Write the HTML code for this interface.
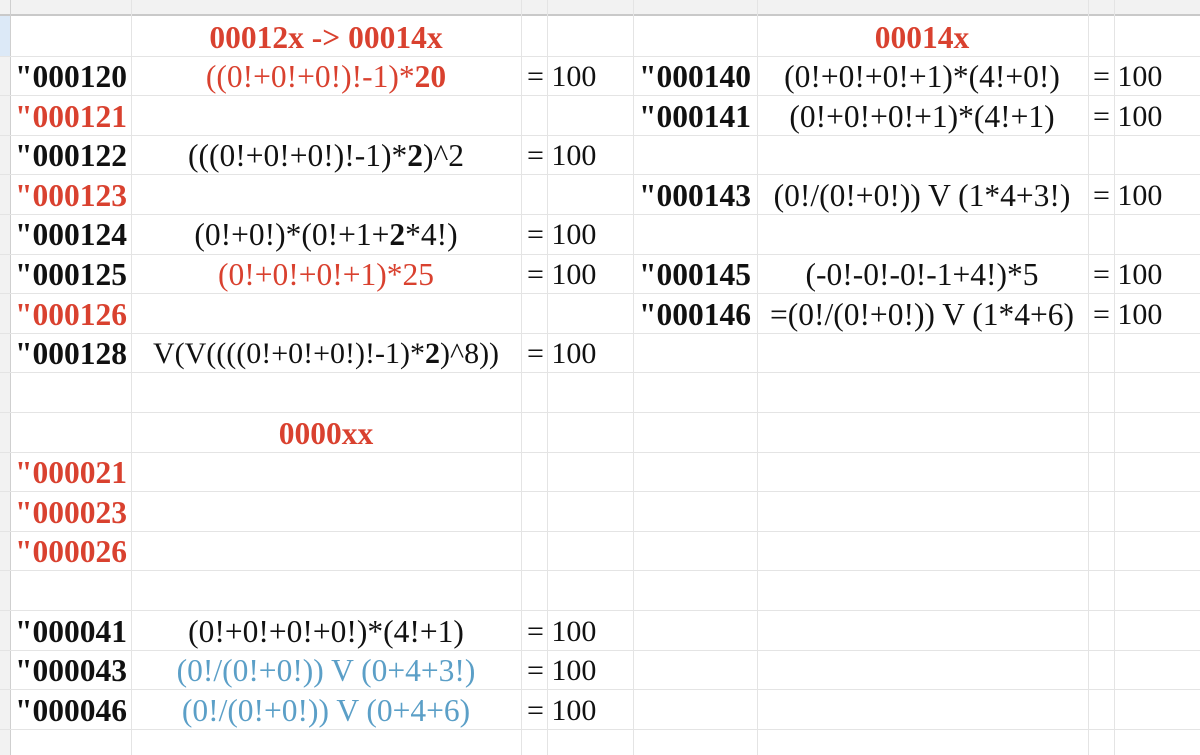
<!DOCTYPE html>
<html><head><meta charset="utf-8"><style>
*{margin:0;padding:0;box-sizing:border-box}
body{width:1200px;height:755px;overflow:hidden;background:#fff;position:relative;font-family:"Liberation Serif",serif;font-size:31.5px;color:#111}
.hl{position:absolute;left:0;width:1200px;height:1px;background:#e4e4e4}
.vl{position:absolute;top:0;height:755px;width:1px;background:#e4e4e4}
.t{position:absolute;height:39px;line-height:41px;white-space:nowrap}
.c{transform:translateX(-50%)}
.b{font-weight:bold;font-size:31.5px}
.r{color:#d9412f}
.u{color:#5b9fc7}
.e{font-size:30px}
</style></head><body>
<div style="position:absolute;left:0;top:0;width:1200px;height:14px;background:#f2f2f2"></div>
<div style="position:absolute;left:0;top:14px;width:1200px;height:2px;background:#c9c9c9"></div>
<div style="position:absolute;left:0;top:16px;width:10px;height:739px;background:#f2f2f2"></div>
<div style="position:absolute;left:0;top:16px;width:10px;height:40px;background:#dce9f7"></div>
<div class="vl" style="left:10px;background:#cfcfcf"></div>
<div class="vl" style="left:131px"></div>
<div class="vl" style="left:521px"></div>
<div class="vl" style="left:547px"></div>
<div class="vl" style="left:633px"></div>
<div class="vl" style="left:757px"></div>
<div class="vl" style="left:1088px"></div>
<div class="vl" style="left:1114px"></div>
<div class="hl" style="top:56px"></div><div class="hl" style="top:95px"></div><div class="hl" style="top:135px"></div><div class="hl" style="top:174px"></div><div class="hl" style="top:214px"></div><div class="hl" style="top:254px"></div><div class="hl" style="top:293px"></div><div class="hl" style="top:333px"></div><div class="hl" style="top:372px"></div><div class="hl" style="top:412px"></div><div class="hl" style="top:452px"></div><div class="hl" style="top:491px"></div><div class="hl" style="top:531px"></div><div class="hl" style="top:570px"></div><div class="hl" style="top:610px"></div><div class="hl" style="top:650px"></div><div class="hl" style="top:689px"></div><div class="hl" style="top:729px"></div>

<div class="t c b r" style="left:326px;top:17px">00012x -&gt; 00014x</div>
<div class="t c b r" style="left:922px;top:17px">00014x</div>

<div class="t b" style="left:15px;top:56px">"000120</div>
<div class="t c r" style="left:326px;top:56px">((0!+0!+0!)!-1)*<b>20</b></div>
<div class="t e" style="left:527px;top:56px">= 100</div>
<div class="t b" style="left:639px;top:56px">"000140</div>
<div class="t c" style="left:922px;top:56px">(0!+0!+0!+1)*(4!+0!)</div>
<div class="t e" style="left:1093px;top:56px">= 100</div>

<div class="t b r" style="left:15px;top:96px">"000121</div>
<div class="t b" style="left:639px;top:96px">"000141</div>
<div class="t c" style="left:922px;top:96px">(0!+0!+0!+1)*(4!+1)</div>
<div class="t e" style="left:1093px;top:96px">= 100</div>

<div class="t b" style="left:15px;top:135px">"000122</div>
<div class="t c" style="left:326px;top:135px">(((0!+0!+0!)!-1)*<b>2</b>)^2</div>
<div class="t e" style="left:527px;top:135px">= 100</div>

<div class="t b r" style="left:15px;top:175px">"000123</div>
<div class="t b" style="left:639px;top:175px">"000143</div>
<div class="t c" style="left:922px;top:175px">(0!/(0!+0!)) V (1*4+3!)</div>
<div class="t e" style="left:1093px;top:175px">= 100</div>

<div class="t b" style="left:15px;top:214px">"000124</div>
<div class="t c" style="left:326px;top:214px">(0!+0!)*(0!+1+<b>2</b>*4!)</div>
<div class="t e" style="left:527px;top:214px">= 100</div>

<div class="t b" style="left:15px;top:254px">"000125</div>
<div class="t c r" style="left:326px;top:254px">(0!+0!+0!+1)*25</div>
<div class="t e" style="left:527px;top:254px">= 100</div>
<div class="t b" style="left:639px;top:254px">"000145</div>
<div class="t c" style="left:922px;top:254px">(-0!-0!-0!-1+4!)*5</div>
<div class="t e" style="left:1093px;top:254px">= 100</div>

<div class="t b r" style="left:15px;top:294px">"000126</div>
<div class="t b" style="left:639px;top:294px">"000146</div>
<div class="t c" style="left:922px;top:294px">=(0!/(0!+0!)) V (1*4+6)</div>
<div class="t e" style="left:1093px;top:294px">= 100</div>

<div class="t b" style="left:15px;top:333px">"000128</div>
<div class="t c" style="left:326px;top:333px;font-size:30px">V(V((((0!+0!+0!)!-1)*<b>2</b>)^8))</div>
<div class="t e" style="left:527px;top:333px">= 100</div>

<div class="t c b r" style="left:326px;top:413px">0000xx</div>
<div class="t b r" style="left:15px;top:452px">"000021</div>
<div class="t b r" style="left:15px;top:492px">"000023</div>
<div class="t b r" style="left:15px;top:531px">"000026</div>

<div class="t b" style="left:15px;top:611px">"000041</div>
<div class="t c" style="left:326px;top:611px">(0!+0!+0!+0!)*(4!+1)</div>
<div class="t e" style="left:527px;top:611px">= 100</div>
<div class="t b" style="left:15px;top:650px">"000043</div>
<div class="t c u" style="left:326px;top:650px">(0!/(0!+0!)) V (0+4+3!)</div>
<div class="t e" style="left:527px;top:650px">= 100</div>
<div class="t b" style="left:15px;top:690px">"000046</div>
<div class="t c u" style="left:326px;top:690px">(0!/(0!+0!)) V (0+4+6)</div>
<div class="t e" style="left:527px;top:690px">= 100</div>
</body></html>
